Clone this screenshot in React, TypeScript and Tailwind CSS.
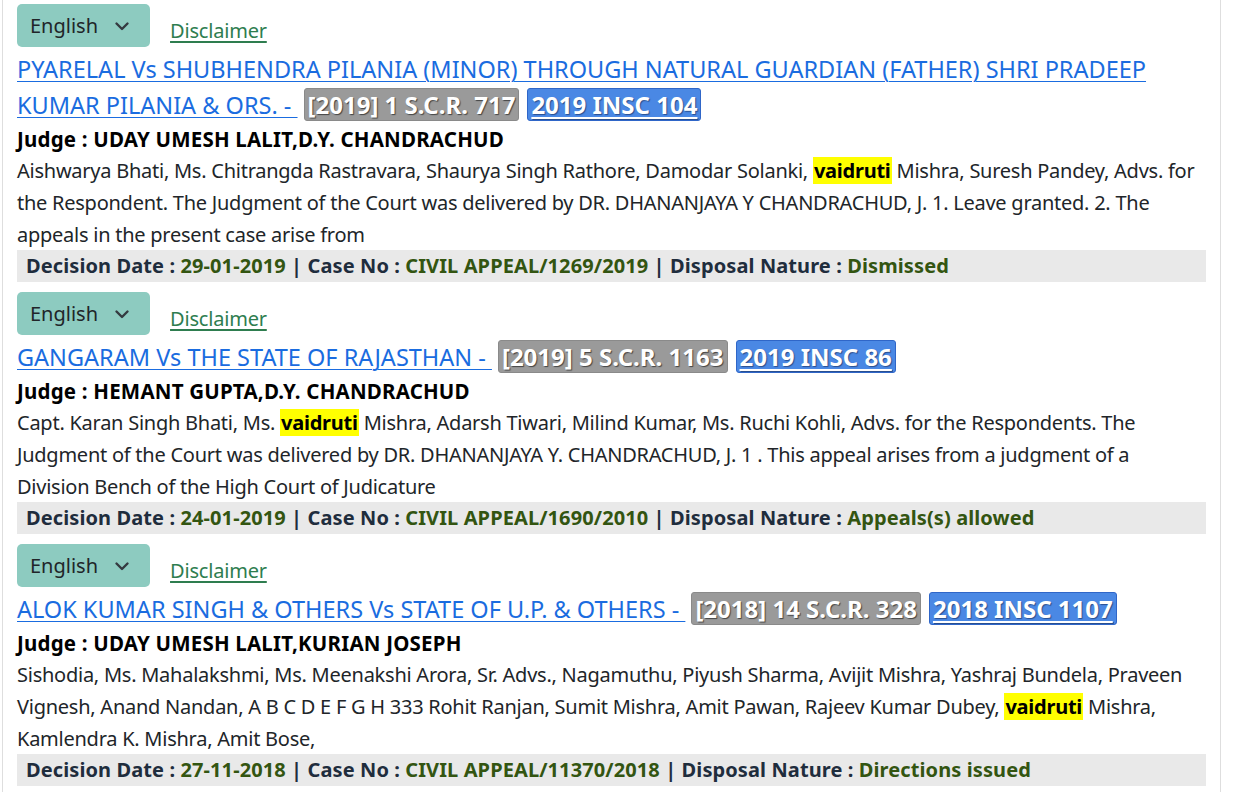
import React from "react";

type Item = {
  title: string;
  scr: string;
  insc: string;
  judge: string;
  body: React.ReactNode;
  date: string;
  caseNo: string;
  nature: string;
};

const Hl = ({ children }: { children: React.ReactNode }) => (
  <mark className="bg-[#ffff00] font-bold text-black px-[1px]">{children}</mark>
);

const items: Item[] = [
  {
    title: "PYARELAL Vs SHUBHENDRA PILANIA (MINOR) THROUGH NATURAL GUARDIAN (FATHER) SHRI PRADEEP KUMAR PILANIA & ORS. - ",
    scr: "[2019] 1 S.C.R. 717",
    insc: "2019 INSC 104",
    judge: "UDAY UMESH LALIT,D.Y. CHANDRACHUD",
    body: (
      <>
        Aishwarya Bhati, Ms. Chitrangda Rastravara, Shaurya Singh Rathore, Damodar Solanki, <Hl>vaidruti</Hl> Mishra, Suresh
        Pandey, Advs. for the Respondent. The Judgment of the Court was delivered by DR. DHANANJAYA Y CHANDRACHUD, J. 1. Leave
        granted. 2. The appeals in the present case arise from
      </>
    ),
    date: "29-01-2019",
    caseNo: "CIVIL APPEAL/1269/2019",
    nature: "Dismissed",
  },
  {
    title: "GANGARAM Vs THE STATE OF RAJASTHAN - ",
    scr: "[2019] 5 S.C.R. 1163",
    insc: "2019 INSC 86",
    judge: "HEMANT GUPTA,D.Y. CHANDRACHUD",
    body: (
      <>
        Capt. Karan Singh Bhati, Ms. <Hl>vaidruti</Hl> Mishra, Adarsh Tiwari, Milind Kumar, Ms. Ruchi Kohli, Advs. for the
        Respondents. The Judgment of the Court was delivered by DR. DHANANJAYA Y. CHANDRACHUD, J. 1 . This appeal arises from a
        judgment of a Division Bench of the High Court of Judicature
      </>
    ),
    date: "24-01-2019",
    caseNo: "CIVIL APPEAL/1690/2010",
    nature: "Appeals(s) allowed",
  },
  {
    title: "ALOK KUMAR SINGH & OTHERS Vs STATE OF U.P. & OTHERS - ",
    scr: "[2018] 14 S.C.R. 328",
    insc: "2018 INSC 1107",
    judge: "UDAY UMESH LALIT,KURIAN JOSEPH",
    body: (
      <>
        Sishodia, Ms. Mahalakshmi, Ms. Meenakshi Arora, Sr. Advs., Nagamuthu, Piyush Sharma, Avijit Mishra, Yashraj Bundela,
        Praveen Vignesh, Anand Nandan, A B C D E F G H 333 Rohit Ranjan, Sumit Mishra, Amit Pawan, Rajeev Kumar Dubey,{" "}
        <Hl>vaidruti</Hl> Mishra, Kamlendra K. Mishra, Amit Bose,
      </>
    ),
    date: "27-11-2018",
    caseNo: "CIVIL APPEAL/11370/2018",
    nature: "Directions issued",
  },
];

function ResultCard({ item }: { item: Item }) {
  return (
    <div className="pt-[4px] pb-[6px]">
      <div className="flex items-end gap-5">
        <button className="flex items-center gap-[16px] h-[43px] pl-[13px] pr-[20px] rounded-[5px] bg-[#8dcbc0] text-[#212529] text-[20px]">
          English
          <svg width="16" height="16" viewBox="0 0 16 16" fill="none" stroke="#343a40" strokeWidth="2.4" strokeLinecap="round" strokeLinejoin="round">
            <path d="M2.5 5.5 8 11l5.5-5.5" />
          </svg>
        </button>
        <a href="#" className="text-[20px] text-[#2e7d4f] underline underline-offset-[3px] mb-[1px] tracking-[-0.2px]">
          Disclaimer
        </a>
      </div>
      <div className="text-[23.5px] leading-[36px] mt-[4px]">
        <a href="#" className="text-[#1a6ce0] underline underline-offset-[3px] decoration-[1px]">
          {item.title}
        </a>
        <span className="inline-block ml-[6px] bg-[#9a9a9a] text-white text-[24px] font-bold px-[3px] leading-[31px] rounded-[3px] border border-[#8a8a8a] [text-shadow:1px_1px_1px_#444]">
          {item.scr}
        </span>
        <a
          href="#"
          className="inline-block ml-[8px] bg-[#4a88e4] text-white text-[24px] font-bold px-[3px] leading-[31px] rounded-[3px] border border-[#2f66c8] underline underline-offset-[3px] [text-shadow:1px_1px_1px_#2a4f8f]"
        >
          {item.insc}
        </a>
      </div>
      <div className="text-[20.5px] font-bold text-black leading-[32px] tracking-[0.2px]">Judge : {item.judge}</div>
      <div className="text-[20px] text-[#212529] leading-[32px] tracking-[-0.25px]">{item.body}</div>
      <div className="mt-[-1px] bg-[#e9e9e9] h-[32px] flex items-center px-[9px] text-[20px] font-bold text-[#1f2d3d] whitespace-nowrap tracking-[0.1px]">
        Decision Date :&nbsp;<span className="text-[#335511]">{item.date}</span>&nbsp;| Case No :&nbsp;
        <span className="text-[#335511]">{item.caseNo}</span>&nbsp;| Disposal Nature :&nbsp;
        <span className="text-[#335511]">{item.nature}</span>
      </div>
    </div>
  );
}

export default function App() {
  return (
    <div className="min-h-screen bg-white font-['Noto_Sans','Open_Sans',sans-serif]">
      <div className="w-[1219px] ml-[2px] border-l border-r border-[#dedede] pl-[14px] pr-[14px] min-h-[792px]">
        {items.map((it) => (
          <ResultCard key={it.insc} item={it} />
        ))}
      </div>
    </div>
  );
}
